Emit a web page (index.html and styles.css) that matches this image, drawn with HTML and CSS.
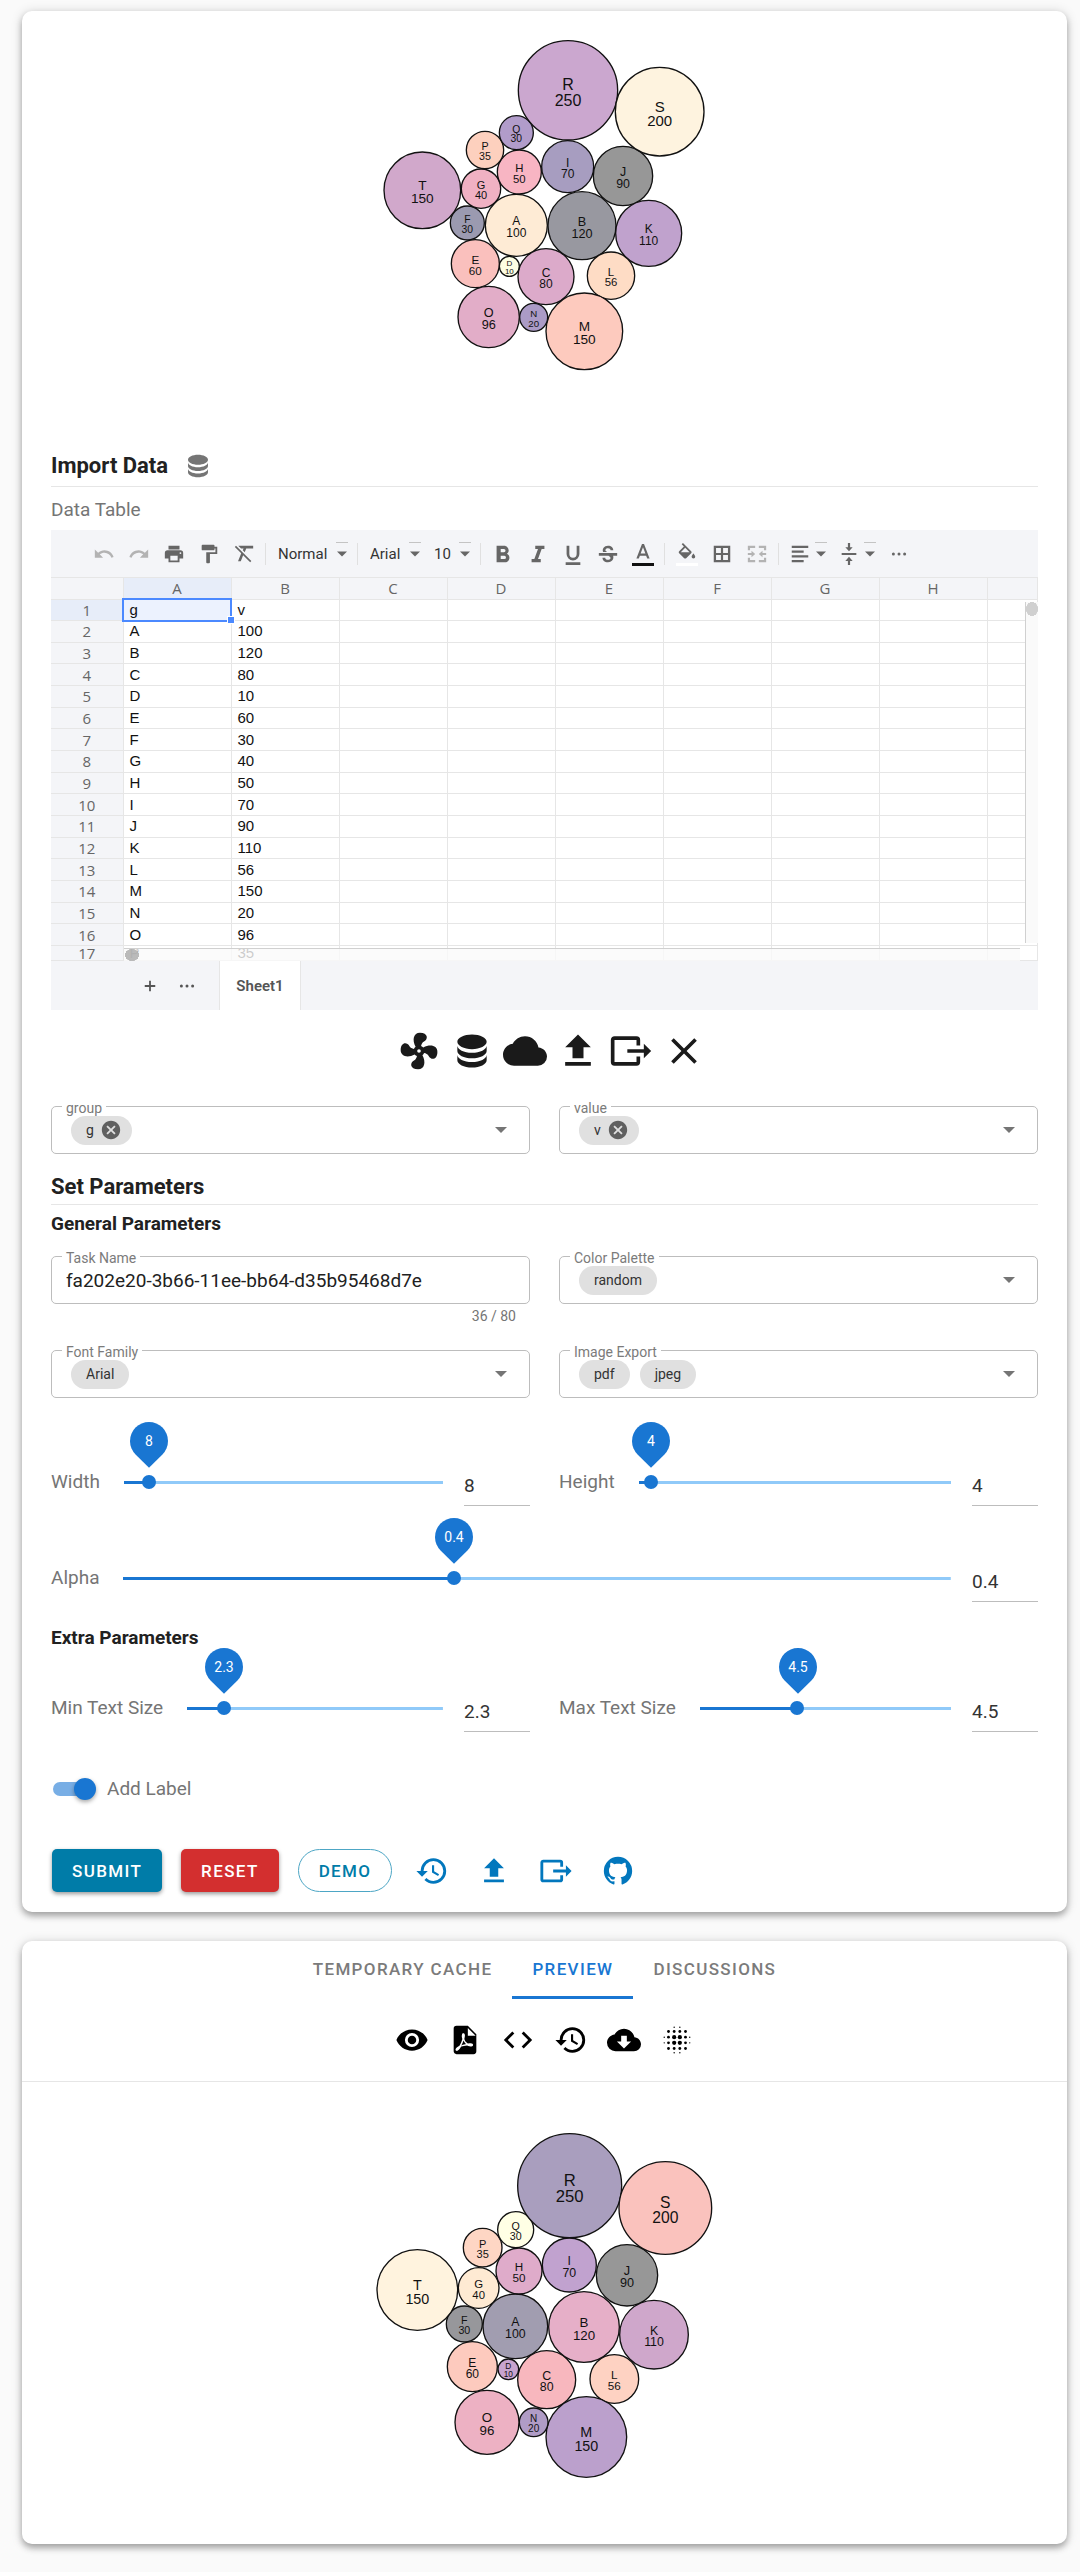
FILE: index.html
```html
<!DOCTYPE html>
<html lang="en">
<head>
    <meta charset="UTF-8">
    <meta name="viewport" content="width=device-width, initial-scale=1.0">
    <title>Circle Packing</title>
    <link rel="stylesheet" href="styles.css">
</head>
<body>
    <svg class="sprite" aria-hidden="true">
        <symbol id="i-database" viewBox="0 0 24 24"><path d="M12,3C7.58,3 4,4.79 4,7C4,9.21 7.58,11 12,11C16.42,11 20,9.21 20,7C20,4.79 16.42,3 12,3M4,9V12C4,14.21 7.58,16 12,16C16.42,16 20,14.21 20,12V9C20,11.21 16.42,13 12,13C7.58,13 4,11.21 4,9M4,14V17C4,19.21 7.58,21 12,21C16.42,21 20,19.21 20,17V14C20,16.21 16.42,18 12,18C7.58,18 4,16.21 4,14Z"/></symbol>
        <symbol id="i-undo" viewBox="0 0 24 24"><path d="M12.5,8C9.85,8 7.45,9 5.6,10.6L2,7V16H11L7.38,12.38C8.77,11.22 10.54,10.5 12.5,10.5C16.04,10.5 19.05,12.81 20.1,16L22.47,15.22C21.08,11.03 17.15,8 12.5,8Z"/></symbol>
        <symbol id="i-redo" viewBox="0 0 24 24"><path d="M18.4,10.6C16.55,9 14.15,8 11.5,8C6.85,8 2.92,11.03 1.54,15.22L3.9,16C4.95,12.81 7.95,10.5 11.5,10.5C13.45,10.5 15.23,11.22 16.62,12.38L13,16H22V7L18.4,10.6Z"/></symbol>
        <symbol id="i-print" viewBox="0 0 24 24"><path d="M18,3H6V7H18M19,12A1,1 0 0,1 18,11A1,1 0 0,1 19,10A1,1 0 0,1 20,11A1,1 0 0,1 19,12M16,19H8V14H16M19,8H5A3,3 0 0,0 2,11V17H6V21H18V17H22V11A3,3 0 0,0 19,8Z"/></symbol>
        <symbol id="i-paint" viewBox="0 0 24 24"><path d="M18,4V3A1,1 0 0,0 17,2H5A1,1 0 0,0 4,3V7A1,1 0 0,0 5,8H17A1,1 0 0,0 18,7V6H19V10H9V21A1,1 0 0,0 10,22H12A1,1 0 0,0 13,21V12H21V4H18Z"/></symbol>
        <symbol id="i-clear" viewBox="0 0 24 24"><path d="M3.27,3L2,4.27L8.97,11.24L5.5,20H8.5L11.07,13.34L18.73,21L20,19.73L3.27,3M6,3V3.18L8.82,6H11.5L10.7,8L12.8,10.1L14.41,6H22V3H6Z"/></symbol>
        <symbol id="i-bold" viewBox="0 0 24 24"><path d="M13.5,17.5H9.5V14H13.5A1.7,1.7 0 0,1 13.5,17.5M9.5,6.5H13A1.7,1.7 0 0,1 13,10H9.5M16.3,11.8C17.5,11 18.2,9.7 18.2,8.3C18.2,5.5 16,3 13.25,3H5V21H14.5C17,21 19,18.6 19,16C19,14.2 18,12.6 16.3,11.8Z"/></symbol>
        <symbol id="i-italic" viewBox="0 0 24 24"><path d="M9,3V6.5H12L8,17.5H5V21H15V17.5H12L16,6.5H19V3H9Z"/></symbol>
        <symbol id="i-underline" viewBox="0 0 24 24"><path d="M4,24H20V21H4V24M12,19A7,7 0 0,0 19,12V3H16V12A4,4 0 0,1 12,16A4,4 0 0,1 8,12V3H5V12A7,7 0 0,0 12,19Z"/></symbol>
        <symbol id="i-strike" viewBox="0 0 24 24"><path d="M22,11V14H17.6C18.6,17 17,21 12,21C8,21 6,18.6 6,16H9C9,17.4 10.2,18.4 12,18.4C14.4,18.4 15.6,16.6 14,15L12.5,14H2V11H22M17.8,8H14.8C14.8,6.4 13.6,5.6 12,5.6C9.4,5.6 8.4,7.8 10,9L11,9.8H6.6C5.4,6.6 7.6,3 12,3C15.6,3 17.8,5.2 17.8,8Z"/></symbol>
        <symbol id="i-color" viewBox="0 0 24 24"><path d="M9.4,11.5L12,4.5L14.6,11.5M10.9,1L4.8,17H7.4L8.6,14H15.4L16.6,17H19.2L13.1,1H10.9Z"/></symbol>
        <symbol id="i-fill" viewBox="0 0 24 24"><path d="M19,11.5C19,11.5 17,13.67 17,15A2,2 0 0,0 21,15C21,13.67 19,11.5 19,11.5M5.21,10L10,5.21L14.79,10M16.56,8.94L7.62,0L6.21,1.41L8.59,3.79L3.44,8.94C2.85,9.5 2.85,10.47 3.44,11.06L8.94,16.56C9.23,16.85 9.62,17 10,17C10.38,17 10.77,16.85 11.06,16.56L16.56,11.06C17.15,10.47 17.15,9.5 16.56,8.94Z"/></symbol>
        <symbol id="i-border" viewBox="0 0 24 24"><path d="M18.5,10.8H13.2V5.5H18.5M18.5,18.5H13.2V13.2H18.5M10.8,10.8H5.5V5.5H10.8M10.8,18.5H5.5V13.2H10.8M3,21H21V3H3V21Z"/></symbol>
        <symbol id="i-merge" viewBox="0 0 24 24"><path d="M2,3H10V5.4H4.4V8H2ZM14,3H22V8H19.6V5.4H14ZM2,16H4.4V18.6H10V21H2ZM19.6,16H22V21H14V18.6H19.6ZM2,10.9H6V8.5L10,12L6,15.5V13.1H2ZM22,10.9H18V8.5L14,12L18,15.5V13.1H22Z"/></symbol>
        <symbol id="i-align" viewBox="0 0 24 24"><path d="M3,3H21V5.4H3ZM3,8.2H16V10.6H3ZM3,13.4H21V15.8H3ZM3,18.6H16V21H3Z"/></symbol>
        <symbol id="i-valign" viewBox="0 0 24 24"><path d="M8,19.5H10.8V24H13.2V19.5H16L12,15L8,19.5M16,4.5H13.2V0H10.8V4.5H8L12,9L16,4.5M4,10.8V13.2H20V10.8H4Z"/></symbol>
        <symbol id="i-dots" viewBox="0 0 24 24"><circle cx="4.5" cy="12" r="2"/><circle cx="12" cy="12" r="2"/><circle cx="19.5" cy="12" r="2"/></symbol>
        <symbol id="i-plus" viewBox="0 0 24 24"><path d="M19,13.2H13.2V19H10.8V13.2H5V10.8H10.8V5H13.2V10.8H19V13.2Z"/></symbol>
        <symbol id="i-fan" viewBox="0 0 24 24"><path d="M12,11A1,1 0 0,0 11,12A1,1 0 0,0 12,13A1,1 0 0,0 13,12A1,1 0 0,0 12,11M12.5,2C17,2 17.11,5.57 14.75,6.75C13.76,7.24 13.32,8.29 13.13,9.22C13.61,9.42 14.03,9.73 14.35,10.13C18.05,8.13 22.03,8.92 22.03,12.5C22.03,17 18.46,17.1 17.28,14.73C16.78,13.74 15.72,13.3 14.79,13.11C14.59,13.59 14.28,14 13.88,14.34C15.87,18.03 15.08,22 11.5,22C7,22 6.91,18.42 9.27,17.24C10.25,16.75 10.69,15.71 10.89,14.79C10.4,14.59 9.97,14.27 9.65,13.87C5.96,15.85 2,15.07 2,11.5C2,7 5.56,6.89 6.74,9.26C7.24,10.25 8.29,10.68 9.22,10.87C9.41,10.39 9.73,9.97 10.14,9.65C8.15,5.96 8.94,2 12.5,2Z"/></symbol>
        <symbol id="i-cloud" viewBox="0 0 24 24"><path d="M19.35,10.03C18.67,6.59 15.64,4 12,4C9.11,4 6.6,5.64 5.35,8.03C2.34,8.36 0,10.9 0,14A6,6 0 0,0 6,20H19A5,5 0 0,0 24,15C24,12.36 21.95,10.22 19.35,10.03Z"/></symbol>
        <symbol id="i-upload" viewBox="0 0 24 24"><path d="M9,16V10H5L12,3L19,10H15V16H9M5,20V18H19V20H5Z"/></symbol>
        <symbol id="i-export" viewBox="0 0 24 24"><path d="M23,12L19,8V11H10V13H19V16M1,18V6C1,4.89 1.9,4 3,4H15A2,2 0 0,1 17,6V9H15V6H3V18H15V15H17V18A2,2 0 0,1 15,20H3A2,2 0 0,1 1,18Z"/></symbol>
        <symbol id="i-close" viewBox="0 0 24 24"><path d="M19,6.41L17.59,5L12,10.59L6.41,5L5,6.41L10.59,12L5,17.59L6.41,19L12,13.41L17.59,19L19,17.59L13.41,12L19,6.41Z"/></symbol>
        <symbol id="i-remove" viewBox="0 0 24 24"><path d="M12,2C17.53,2 22,6.47 22,12C22,17.53 17.53,22 12,22C6.47,22 2,17.53 2,12C2,6.47 6.47,2 12,2M15.59,7L12,10.59L8.41,7L7,8.41L10.59,12L7,15.59L8.41,17L12,13.41L15.59,17L17,15.59L13.41,12L17,8.41L15.59,7Z"/></symbol>
        <symbol id="i-caret" viewBox="0 0 12 6"><path d="M0,0H12L6,6Z"/></symbol>
        <symbol id="i-history" viewBox="0 0 24 24"><path d="M13.5,8H12V13L16.28,15.54L17,14.33L13.5,12.25V8M13,3A9,9 0 0,0 4,12H1L4.96,16.03L9,12H6A7,7 0 0,1 13,5A7,7 0 0,1 20,12A7,7 0 0,1 13,19C11.07,19 9.32,18.21 8.06,16.94L6.64,18.36C8.27,20 10.5,21 13,21A9,9 0 0,0 22,12A9,9 0 0,0 13,3"/></symbol>
        <symbol id="i-github" viewBox="0 0 24 24"><path d="M12,2A10,10 0 0,0 2,12C2,16.42 4.87,20.17 8.84,21.5C9.34,21.58 9.5,21.27 9.5,21C9.5,20.77 9.5,20.14 9.5,19.31C6.73,19.91 6.14,17.97 6.14,17.97C5.68,16.81 5.03,16.5 5.03,16.5C4.12,15.88 5.1,15.9 5.1,15.9C6.1,15.97 6.63,16.93 6.63,16.93C7.5,18.45 8.97,18 9.54,17.76C9.63,17.11 9.89,16.67 10.17,16.42C7.95,16.17 5.62,15.31 5.62,11.5C5.62,10.39 6,9.5 6.65,8.79C6.55,8.54 6.2,7.5 6.75,6.15C6.75,6.15 7.59,5.88 9.5,7.17C10.29,6.95 11.15,6.84 12,6.84C12.85,6.84 13.71,6.95 14.5,7.17C16.41,5.88 17.25,6.15 17.25,6.15C17.8,7.5 17.45,8.54 17.35,8.79C18,9.5 18.38,10.39 18.38,11.5C18.38,15.32 16.04,16.16 13.81,16.41C14.17,16.72 14.5,17.33 14.5,18.26C14.5,19.6 14.5,20.68 14.5,21C14.5,21.27 14.66,21.59 15.17,21.5C19.14,20.16 22,16.42 22,12A10,10 0 0,0 12,2Z"/></symbol>
        <symbol id="i-eye" viewBox="0 0 24 24"><path d="M12,9A3,3 0 0,0 9,12A3,3 0 0,0 12,15A3,3 0 0,0 15,12A3,3 0 0,0 12,9M12,17A5,5 0 0,1 7,12A5,5 0 0,1 12,7A5,5 0 0,1 17,12A5,5 0 0,1 12,17M12,4.5C7,4.5 2.73,7.61 1,12C2.73,16.39 7,19.5 12,19.5C17,19.5 21.27,16.39 23,12C21.27,7.61 17,4.5 12,4.5Z"/></symbol>
        <symbol id="i-pdf" viewBox="0 0 24 24"><path fill-rule="evenodd" d="M14,9H19.5L14,3.5V9M6,2H14L20,8V20A2,2 0 0,1 18,22H6C4.89,22 4,21.1 4,20V4A2,2 0 0,1 6,2M10.93,12.44C11.34,13.34 11.86,14.08 12.46,14.59L12.87,14.91C12,15.07 10.8,15.35 9.53,15.84L9.42,15.88L9.92,14.84C10.37,13.97 10.7,13.18 10.93,12.44M17.41,16.25C17.59,16.07 17.68,15.84 17.69,15.59C17.72,15.39 17.67,15.2 17.57,15.04C17.28,14.57 16.53,14.35 15.29,14.35L14,14.42L13.13,13.84C12.5,13.32 11.93,12.41 11.53,11.28L11.57,11.14C11.9,9.81 12.21,8.2 11.55,7.54C11.39,7.38 11.17,7.3 10.94,7.3H10.7C10.33,7.3 10,7.69 9.91,8.07C9.54,9.4 9.76,10.13 10.13,11.34C9.88,12.23 9.56,13.25 9.05,14.28L8.09,16.08L7.2,16.57C6,17.32 5.43,18.16 5.32,18.69C5.28,18.88 5.3,19.05 5.37,19.23L5.4,19.28L5.88,19.59L6.32,19.7C7.13,19.7 8.05,18.75 9.29,16.63L9.47,16.56C10.5,16.23 11.78,16 13.5,15.81C14.53,16.32 15.74,16.55 16.5,16.55C16.94,16.55 17.24,16.44 17.41,16.25Z"/></symbol>
        <symbol id="i-code" viewBox="0 0 24 24"><path d="M14.6,16.6L19.2,12L14.6,7.4L16,6L22,12L16,18L14.6,16.6M9.4,16.6L4.8,12L9.4,7.4L8,6L2,12L8,18L9.4,16.6Z"/></symbol>
        <symbol id="i-download" viewBox="0 0 24 24"><path d="M17,13L12,18L7,13H10V9H14V13M19.35,10.03C18.67,6.59 15.64,4 12,4C9.11,4 6.6,5.64 5.35,8.03C2.34,8.36 0,10.9 0,14A6,6 0 0,0 6,20H19A5,5 0 0,0 24,15C24,12.36 21.95,10.22 19.35,10.03Z"/></symbol>
        <symbol id="i-blur" viewBox="0 0 24 24">
            <circle cx="10" cy="10" r="1.5"/><circle cx="14" cy="10" r="1.5"/><circle cx="10" cy="14" r="1.5"/><circle cx="14" cy="14" r="1.5"/>
            <circle cx="6" cy="6" r="1"/><circle cx="10" cy="6" r="1"/><circle cx="14" cy="6" r="1"/><circle cx="18" cy="6" r="1"/>
            <circle cx="6" cy="10" r="1"/><circle cx="6" cy="14" r="1"/><circle cx="18" cy="10" r="1"/><circle cx="18" cy="14" r="1"/>
            <circle cx="6" cy="18" r="1"/><circle cx="10" cy="18" r="1"/><circle cx="14" cy="18" r="1"/><circle cx="18" cy="18" r="1"/>
            <circle cx="10" cy="3" r=".5"/><circle cx="14" cy="3" r=".5"/><circle cx="10" cy="21" r=".5"/><circle cx="14" cy="21" r=".5"/>
            <circle cx="3" cy="10" r=".5"/><circle cx="3" cy="14" r=".5"/><circle cx="21" cy="10" r=".5"/><circle cx="21" cy="14" r=".5"/>
        </symbol>
    </svg>

    <main class="page">
        <section class="card form-card">
            <svg class="chart" id="demo-chart" viewBox="0 0 1110 1110" role="img" aria-label="Circle packing example"></svg>

            <h2 class="title">Import Data <svg class="title-icon"><use href="#i-database"/></svg></h2>
            <p class="caption">Data Table</p>

            <div class="sheet">
                <div class="toolbar">
                    <button class="tool off" aria-label="Undo"><svg><use href="#i-undo"/></svg></button>
                    <button class="tool off" aria-label="Redo"><svg><use href="#i-redo"/></svg></button>
                    <button class="tool" aria-label="Print"><svg><use href="#i-print"/></svg></button>
                    <button class="tool" aria-label="Paint format"><svg><use href="#i-paint"/></svg></button>
                    <button class="tool" aria-label="Clear format"><svg><use href="#i-clear"/></svg></button>
                    <span class="sep"></span>
                    <span class="pick"><select aria-label="Format"><option>Normal</option></select><svg class="drop"><use href="#i-caret"/></svg></span>
                    <span class="sep"></span>
                    <span class="pick"><select aria-label="Font"><option>Arial</option></select><svg class="drop"><use href="#i-caret"/></svg></span>
                    <span class="pick"><select aria-label="Font size"><option>10</option></select><svg class="drop"><use href="#i-caret"/></svg></span>
                    <span class="sep"></span>
                    <button class="tool" aria-label="Bold"><svg><use href="#i-bold"/></svg></button>
                    <button class="tool" aria-label="Italic"><svg><use href="#i-italic"/></svg></button>
                    <button class="tool" aria-label="Underline"><svg><use href="#i-underline"/></svg></button>
                    <button class="tool" aria-label="Strike"><svg><use href="#i-strike"/></svg></button>
                    <button class="tool swatch" aria-label="Text color"><svg><use href="#i-color"/></svg></button>
                    <span class="sep"></span>
                    <button class="tool swatch blank" aria-label="Fill color"><svg><use href="#i-fill"/></svg></button>
                    <button class="tool" aria-label="Borders"><svg><use href="#i-border"/></svg></button>
                    <button class="tool off" aria-label="Merge cells"><svg><use href="#i-merge"/></svg></button>
                    <span class="sep"></span>
                    <button class="tool wide" aria-label="Horizontal align"><svg><use href="#i-align"/></svg><svg class="drop"><use href="#i-caret"/></svg></button>
                    <button class="tool wide" aria-label="Vertical align"><svg><use href="#i-valign"/></svg><svg class="drop"><use href="#i-caret"/></svg></button>
                    <button class="tool more" aria-label="More"><svg><use href="#i-dots"/></svg></button>
                </div>
                <div class="grid">
                    <table>
                        <thead>
                            <tr><th class="corner"></th><th class="active">A</th><th>B</th><th>C</th><th>D</th><th>E</th><th>F</th><th>G</th><th>H</th><th class="rest"></th></tr>
                        </thead>
                        <tbody id="rows"></tbody>
                    </table>
                    <span class="scroll-y"></span>
                    <span class="scroll-x"></span>
                </div>
                <div class="sheet-tabs">
                    <button aria-label="Add sheet"><svg><use href="#i-plus"/></svg></button>
                    <button aria-label="Sheet list"><svg><use href="#i-dots"/></svg></button>
                    <button class="sheet-tab">Sheet1</button>
                </div>
            </div>

            <div class="data-actions">
                <button aria-label="Clean"><svg><use href="#i-fan"/></svg></button>
                <button aria-label="Database"><svg><use href="#i-database"/></svg></button>
                <button aria-label="Cloud"><svg><use href="#i-cloud"/></svg></button>
                <button aria-label="Upload"><svg><use href="#i-upload"/></svg></button>
                <button aria-label="Export"><svg><use href="#i-export"/></svg></button>
                <button aria-label="Close"><svg><use href="#i-close"/></svg></button>
            </div>

            <div class="row">
                <div class="field">
                    <label for="group">group</label>
                    <span class="chip">g <button aria-label="Remove g"><svg><use href="#i-remove"/></svg></button></span>
                    <select id="group"><option></option></select>
                    <svg class="caret"><use href="#i-caret"/></svg>
                </div>
                <div class="field">
                    <label for="value">value</label>
                    <span class="chip">v <button aria-label="Remove v"><svg><use href="#i-remove"/></svg></button></span>
                    <select id="value"><option></option></select>
                    <svg class="caret"><use href="#i-caret"/></svg>
                </div>
            </div>

            <h2 class="title params-title">Set Parameters</h2>
            <h3 class="subtitle">General Parameters</h3>

            <div class="row general">
                <div>
                    <div class="field">
                        <label for="task">Task Name</label>
                        <input id="task" type="text" maxlength="80" value="fa202e20-3b66-11ee-bb64-d35b95468d7e">
                    </div>
                    <p class="counter">36 / 80</p>
                </div>
                <div class="field">
                    <label for="palette">Color Palette</label>
                    <span class="chip">random</span>
                    <select id="palette"><option></option></select>
                    <svg class="caret"><use href="#i-caret"/></svg>
                </div>
                <div class="field">
                    <label for="font">Font Family</label>
                    <span class="chip">Arial</span>
                    <select id="font"><option></option></select>
                    <svg class="caret"><use href="#i-caret"/></svg>
                </div>
                <div class="field">
                    <label for="export">Image Export</label>
                    <span class="chip">pdf</span>
                    <span class="chip">jpeg</span>
                    <select id="export"><option></option></select>
                    <svg class="caret"><use href="#i-caret"/></svg>
                </div>
            </div>

            <div class="row sliders">
                <div class="slider">
                    <label for="width">Width</label>
                    <div class="track" style="--at: 8%"><input id="width" type="range" min="0" max="100" value="8"><span class="pin"><b>8</b></span></div>
                    <input class="number" type="text" value="8" aria-label="Width value">
                </div>
                <div class="slider">
                    <label for="height">Height</label>
                    <div class="track" style="--at: 4%"><input id="height" type="range" min="0" max="100" value="4"><span class="pin"><b>4</b></span></div>
                    <input class="number" type="text" value="4" aria-label="Height value">
                </div>
                <div class="slider full">
                    <label for="alpha">Alpha</label>
                    <div class="track" style="--at: 40%"><input id="alpha" type="range" min="0" max="1" step="0.1" value="0.4"><span class="pin"><b>0.4</b></span></div>
                    <input class="number" type="text" value="0.4" aria-label="Alpha value">
                </div>
            </div>

            <h3 class="subtitle extra">Extra Parameters</h3>

            <div class="row sliders extra-sliders">
                <div class="slider">
                    <label for="min-size">Min Text Size</label>
                    <div class="track" style="--at: 14.4%"><input id="min-size" type="range" min="1" max="10" step="0.1" value="2.3"><span class="pin"><b>2.3</b></span></div>
                    <input class="number" type="text" value="2.3" aria-label="Min text size value">
                </div>
                <div class="slider">
                    <label for="max-size">Max Text Size</label>
                    <div class="track" style="--at: 38.9%"><input id="max-size" type="range" min="1" max="10" step="0.1" value="4.5"><span class="pin"><b>4.5</b></span></div>
                    <input class="number" type="text" value="4.5" aria-label="Max text size value">
                </div>
            </div>

            <label class="switch"><input type="checkbox" checked>Add Label</label>

            <div class="actions">
                <button class="btn submit">SUBMIT</button>
                <button class="btn reset">RESET</button>
                <button class="btn demo">DEMO</button>
                <div class="links">
                    <button aria-label="History"><svg><use href="#i-history"/></svg></button>
                    <button aria-label="Upload"><svg><use href="#i-upload"/></svg></button>
                    <button aria-label="Export"><svg><use href="#i-export"/></svg></button>
                    <a href="#" aria-label="GitHub"><svg><use href="#i-github"/></svg></a>
                </div>
            </div>
        </section>

        <section class="card result-card">
            <nav class="tabs">
                <a href="#">TEMPORARY CACHE</a>
                <a href="#" class="current">PREVIEW</a>
                <a href="#">DISCUSSIONS</a>
            </nav>
            <div class="preview-actions">
                <button aria-label="View"><svg><use href="#i-eye"/></svg></button>
                <button aria-label="PDF"><svg><use href="#i-pdf"/></svg></button>
                <button aria-label="Code"><svg><use href="#i-code"/></svg></button>
                <button aria-label="History"><svg><use href="#i-history"/></svg></button>
                <button aria-label="Download"><svg><use href="#i-download"/></svg></button>
                <button aria-label="Blur"><svg><use href="#i-blur"/></svg></button>
            </div>
            <svg class="chart" id="result-chart" viewBox="0 0 1110 1110" role="img" aria-label="Circle packing result"></svg>
        </section>
    </main>
    <script src="script.js"></script>
</body>
</html>
```

FILE: styles.css
```css
* {
    box-sizing: border-box;
}
body {
    margin: 0;
    background: #fafafa;
    color: #212121;
    font-family: Roboto, "Liberation Sans", sans-serif;
    font-size: 19px;
    line-height: 24px;
}
h2, h3, p {
    margin: 0;
}
button, input, select {
    font: inherit;
    color: inherit;
    border: none;
    background: none;
    padding: 0;
    margin: 0;
    outline: none;
}
button {
    cursor: pointer;
}
select {
    appearance: none;
}
svg {
    display: block;
    fill: currentColor;
}
.sprite {
    display: none;
}
.page {
    padding: 11px 13px 28px 22px;
    display: flex;
    flex-direction: column;
    gap: 29px;
}
.card {
    background: #fff;
    border-radius: 10px;
    box-shadow: 0 4px 6px rgba(0, 0, 0, 0.28), 0 1px 12px rgba(0, 0, 0, 0.16);
}
.form-card {
    padding: 9px 29px 20px;
}
.chart {
    width: 370px;
    height: 370px;
    margin: 0 auto;
}
.chart circle {
    stroke: #111;
    stroke-width: 4;
}
.chart text {
    font-family: "Liberation Sans", Arial, sans-serif;
    text-anchor: middle;
    fill: #111;
}

/* headings */
.title {
    display: flex;
    align-items: center;
    gap: 15px;
    height: 42px;
    margin-top: 55px;
    border-bottom: 1px solid #e6e6e6;
    font-size: 22px;
    font-weight: 700;
}
.title-icon {
    width: 30px;
    height: 30px;
    color: #757575;
}
.params-title {
    height: 36px;
    margin-top: 15px;
}
.subtitle {
    height: 38px;
    line-height: 38px;
    font-size: 19px;
    font-weight: 700;
}
.caption {
    height: 43px;
    line-height: 46px;
    color: #757575;
}

/* spreadsheet */
.sheet {
    background: #f4f5f8;
}
.toolbar {
    display: flex;
    align-items: center;
    height: 48px;
    padding-left: 35px;
    font-size: 15px;
    border-bottom: 1px solid #e6e6e6;
    color: #666;
}
.tool {
    display: flex;
    align-items: center;
    justify-content: center;
    width: 35px;
    height: 24px;
}
.tool svg {
    width: 22px;
    height: 22px;
}
.tool.off {
    color: #b3b3b3;
}
.swatch {
    background: linear-gradient(#111, #111) center bottom / 22px 3px no-repeat;
}
.swatch.blank {
    background-image: linear-gradient(#fff, #fff);
}
.sep {
    width: 1px;
    height: 22px;
    margin: 0 4px;
    background: #e0e0e0;
}
.pick {
    display: flex;
    align-items: center;
    gap: 8px;
    padding: 0 5px 0 8px;
    color: #333;
}
.toolbar .drop {
    width: 12px;
    height: 24px;
    padding: 9px 1px;
    color: #666;
    background: linear-gradient(#c4c4c4, #c4c4c4) center top / 12px 1px no-repeat;
}
.tool.wide {
    width: 49px;
    gap: 4px;
}
.tool.more svg {
    width: 18px;
}
.grid {
    position: relative;
    background: #fff;
}
.grid table {
    width: 100%;
    height: 383px;
    table-layout: fixed;
    border-collapse: collapse;
    font-family: "Liberation Sans", Arial, sans-serif;
    font-size: 15px;
    line-height: 18px;
}
.grid th {
    width: 108px;
    padding: 0;
    background: #f4f5f8;
    border: 1px solid #e6e6e6;
    border-top: none;
    border-left: none;
    color: #666;
    font-family: "Open Sans", sans-serif;
    font-weight: 400;
}
.grid thead th {
    height: 21px;
}
.grid .corner {
    width: 72px;
}
.grid .rest {
    width: auto;
}
.grid .active {
    background: #e7edf9;
}
.grid td {
    padding: 0 6px;
    border: 1px solid #e6e6e6;
    border-left: none;
    color: #111;
}
.grid tbody tr:last-child > * {
    height: 15px;
    line-height: 14px;
}
.grid .selected {
    background: #ecf2fe;
    outline: 2px solid #4b89ff;
    outline-offset: -1px;
    position: relative;
}
.grid .selected::after {
    content: "";
    position: absolute;
    right: -4px;
    bottom: -4px;
    width: 6px;
    height: 6px;
    background: #4b89ff;
    border: 1px solid #fff;
    box-sizing: content-box;
}
.scroll-y {
    position: absolute;
    top: 24px;
    right: 0;
    bottom: 18px;
    width: 13px;
    border-left: 1px solid #d0d0d0;
    background: radial-gradient(ellipse 6px 7px at 6px 7px, #d0d0d0 98%, transparent) #fafafa;
}
.scroll-x {
    position: absolute;
    left: 73px;
    right: 18px;
    bottom: 0;
    height: 13px;
    border-top: 1px solid #d0d0d0;
    background: radial-gradient(ellipse 7px 6px at 8px 6px, rgba(170, 170, 170, 0.8) 98%, transparent) rgba(250, 250, 250, 0.8);
}
.sheet-tabs {
    display: flex;
    align-items: center;
    height: 49px;
    padding-left: 80px;
    color: #555;
}
.sheet-tabs button {
    display: flex;
    justify-content: center;
    width: 37px;
}
.sheet-tabs svg {
    width: 18px;
    height: 20px;
}
.sheet-tabs .sheet-tab {
    align-items: center;
    width: 82px;
    height: 49px;
    margin-left: 14px;
    background: #fff;
    border: solid #e6e6e6;
    border-width: 0 1px;
    font-size: 15px;
    font-weight: 600;
}

.data-actions {
    display: flex;
    justify-content: center;
    gap: 9px;
    padding: 19px 0 33px 14px;
    color: #1a1a1a;
}
.data-actions svg {
    width: 44px;
    height: 44px;
}

/* outlined fields */
.row {
    display: grid;
    grid-template-columns: 1fr 1fr;
    column-gap: 29px;
}
.field {
    position: relative;
    display: flex;
    align-items: center;
    height: 48px;
    padding: 0 22px 0 14px;
    border: 1px solid #bdbdbd;
    border-radius: 5px;
}
.field > label {
    position: absolute;
    top: -8px;
    left: 10px;
    padding: 0 4px;
    background: #fff;
    color: #7b7b7b;
    font-size: 14px;
    line-height: 18px;
}
.field select, .field input {
    flex: 1;
    min-width: 0;
    height: 40px;
}
.field .caret {
    width: 12px;
    height: 6px;
    color: #757575;
}
.chip {
    position: relative;
    display: flex;
    align-items: center;
    gap: 6px;
    height: 29px;
    margin: 0 5px 0 5px;
    padding: 0 15px;
    border-radius: 15px;
    background: #e0e0e0;
    color: #333;
    font-size: 14px;
}
.chip button {
    margin-right: -5px;
    color: #606060;
}
.chip svg {
    width: 22px;
    height: 22px;
}
.general {
    row-gap: 22px;
    padding-top: 13px;
}
.counter {
    padding-right: 14px;
    color: #757575;
    font-size: 14px;
    line-height: 24px;
    text-align: right;
}

/* sliders */
.sliders {
    padding-top: 60px;
    row-gap: 48px;
}
.slider {
    display: flex;
    align-items: center;
    height: 48px;
}
.slider.full {
    grid-column: 1 / 3;
}
.slider label {
    margin-right: 24px;
    color: #757575;
    white-space: nowrap;
}
.track {
    position: relative;
    flex: 1;
    height: 14px;
    background: linear-gradient(90deg, #1976d2 var(--at), #90caf9 var(--at)) center / 100% 3px no-repeat;
}
.track input {
    appearance: none;
    display: block;
    width: calc(100% + 14px);
    height: 14px;
    margin-left: -7px;
}
.track input::-webkit-slider-thumb {
    appearance: none;
    width: 14px;
    height: 14px;
    border-radius: 50%;
    background: #1976d2;
}
.pin {
    position: absolute;
    left: calc(var(--at) - 19px);
    bottom: 29px;
    width: 38px;
    height: 38px;
    border-radius: 50% 50% 0 50%;
    background: #1976d2;
    color: #fff;
    font-size: 14px;
    line-height: 38px;
    text-align: center;
    transform: rotate(45deg);
    pointer-events: none;
}
.pin b {
    display: block;
    font-weight: 400;
    transform: rotate(-45deg);
}
.number {
    align-self: flex-end;
    width: 66px;
    height: 40px;
    margin-left: 21px;
    border-bottom: 1px solid #bdbdbd;
    color: #333;
}
.extra {
    margin-top: 17px;
}
.extra-sliders {
    padding-top: 27px;
}

.switch {
    display: flex;
    align-items: center;
    gap: 11px;
    width: max-content;
    margin: 45px 0 48px 2px;
    color: #757575;
}
.switch input {
    appearance: none;
    position: relative;
    width: 43px;
    height: 22px;
}
.switch input::before {
    content: "";
    position: absolute;
    left: 0;
    top: 4px;
    width: 38px;
    height: 14px;
    border-radius: 7px;
    background: #78aee5;
}
.switch input::after {
    content: "";
    position: absolute;
    right: 0;
    top: 0;
    width: 22px;
    height: 22px;
    border-radius: 50%;
    background: #1976d2;
    box-shadow: 0 2px 4px rgba(0, 0, 0, 0.35);
}

.actions {
    display: flex;
    align-items: center;
    gap: 19px;
    padding-left: 1px;
}
.btn {
    height: 43px;
    padding: 0 20px;
    border-radius: 5px;
    color: #fff;
    font-size: 17px;
    font-weight: 500;
    letter-spacing: 0.08em;
}
.submit {
    background: #007ca8;
    box-shadow: 0 2px 4px rgba(0, 0, 0, 0.4);
}
.reset {
    background: #d32f2f;
    box-shadow: 0 2px 4px rgba(0, 0, 0, 0.4);
}
.demo {
    border: 1px solid #4da6c5;
    border-radius: 22px;
    color: #007ca8;
}
.links {
    display: flex;
    gap: 28px;
    margin-left: 4px;
    color: #0277bd;
}
.links a {
    color: inherit;
}
.links svg {
    width: 34px;
    height: 34px;
}

/* result card */
.result-card {
    padding-bottom: 63px;
}
.tabs {
    display: flex;
    justify-content: center;
}
.tabs a {
    height: 58px;
    padding: 0 20px;
    color: #7b7b7b;
    font-size: 17px;
    font-weight: 500;
    letter-spacing: 0.08em;
    line-height: 56px;
    text-decoration: none;
}
.tabs .current {
    color: #1976d2;
    border-bottom: 3px solid #1976d2;
}
.preview-actions {
    display: flex;
    justify-content: center;
    gap: 19px;
    padding: 24px 0;
    border-bottom: 1px solid #e6e6e6;
    color: #000;
}
.preview-actions svg {
    width: 34px;
    height: 34px;
}
.result-card .chart {
    margin-top: 29px;
}
```

FILE: script.js
```js
// name, value
const data = [
    ["A", 100], ["B", 120], ["C", 80], ["D", 10], ["E", 60], ["F", 30], ["G", 40],
    ["H", 50], ["I", 70], ["J", 90], ["K", 110], ["L", 56], ["M", 150], ["N", 20],
    ["O", 96], ["P", 35], ["Q", 30], ["R", 250], ["S", 200], ["T", 150]
];

// label size for each value
const sizes = {
    10: 24, 20: 29, 30: 31, 35: 32, 40: 33, 50: 34, 56: 34, 60: 35, 70: 36, 80: 36,
    90: 37, 96: 38, 100: 36, 110: 36, 120: 38, 150: 41, 200: 45, 250: 48
};

// x, y, radius, color
const demo = {
    R: [624, 211, 149, "#cba7cf"], S: [899, 275, 133, "#fef3df"], Q: [469, 338, 51, "#b19cca"],
    P: [375, 390, 56, "#fdd0be"], H: [478, 456, 66, "#f8b5c3"], I: [623, 440, 78, "#a79dc0"],
    J: [789, 468, 89, "#979797"], T: [187, 511, 115, "#d1a8cb"], G: [363, 506, 59, "#f0b1c3"],
    F: [322, 609, 51, "#9b9ab0"], A: [469, 616, 93, "#feebd5"], B: [666, 617, 102, "#9898a0"],
    K: [866, 640, 99, "#c0a2cd"], E: [346, 731, 72, "#fac0bd"], D: [448, 739, 30, "#fdfde3"],
    C: [558, 770, 84, "#dcaaca"], L: [753, 767, 71, "#fedcc5"], O: [386, 891, 92, "#e2adc8"],
    N: [521, 892, 42, "#ab9bc6"], M: [673, 934, 115, "#fdcabe"]
};
const result = {
    R: [629, 224, 156, "#a99ebe"], S: [916, 291, 139, "#fac2bd"], Q: [467, 356, 54, "#ffffe5"],
    P: [368, 410, 58, "#fed6c4"], H: [477, 480, 69, "#dfabca"], I: [628, 462, 81, "#c1a2cf"],
    J: [801, 493, 92, "#979797"], T: [172, 537, 121, "#fff3de"], G: [356, 531, 61, "#feead3"],
    F: [313, 639, 54, "#97979b"], A: [466, 646, 97, "#a19db0"], B: [672, 648, 106, "#e6afc8"],
    K: [882, 671, 103, "#cfa7cb"], E: [337, 767, 75, "#fdcabe"], D: [445, 775, 31, "#c8a4cf"],
    C: [560, 806, 87, "#f8b7be"], L: [763, 804, 73, "#fed2c2"], O: [381, 934, 96, "#edb1c3"],
    N: [521, 934, 43, "#b09cc6"], M: [679, 978, 121, "#bba0cc"]
};

function drawChart(id, circles, scale) {
    let html = "";
    for (const [name, value] of data) {
        const [x, y, r, color] = circles[name];
        const size = Math.round(sizes[value] * scale);
        html += `<circle cx="${x}" cy="${y}" r="${r}" fill="${color}"/>`;
        html += `<text x="${x}" y="${y}" font-size="${size}">${name}</text>`;
        html += `<text x="${x}" y="${Math.round(y + size * 0.95)}" font-size="${size}">${value}</text>`;
    }
    document.getElementById(id).innerHTML = html;
}

function fillTable() {
    const rows = [["g", "v"], ...data.slice(0, 16)];
    document.getElementById("rows").innerHTML = rows.map(([g, v], i) =>
        `<tr><th${i === 0 ? ' class="active"' : ""}>${i + 1}</th>` +
        `<td${i === 0 ? ' class="selected"' : ""}>${g}</td><td>${v}</td>` +
        "<td></td>".repeat(7) + "</tr>"
    ).join("");
}

drawChart("demo-chart", demo, 1);
drawChart("result-chart", result, 1.04);
fillTable();
```
